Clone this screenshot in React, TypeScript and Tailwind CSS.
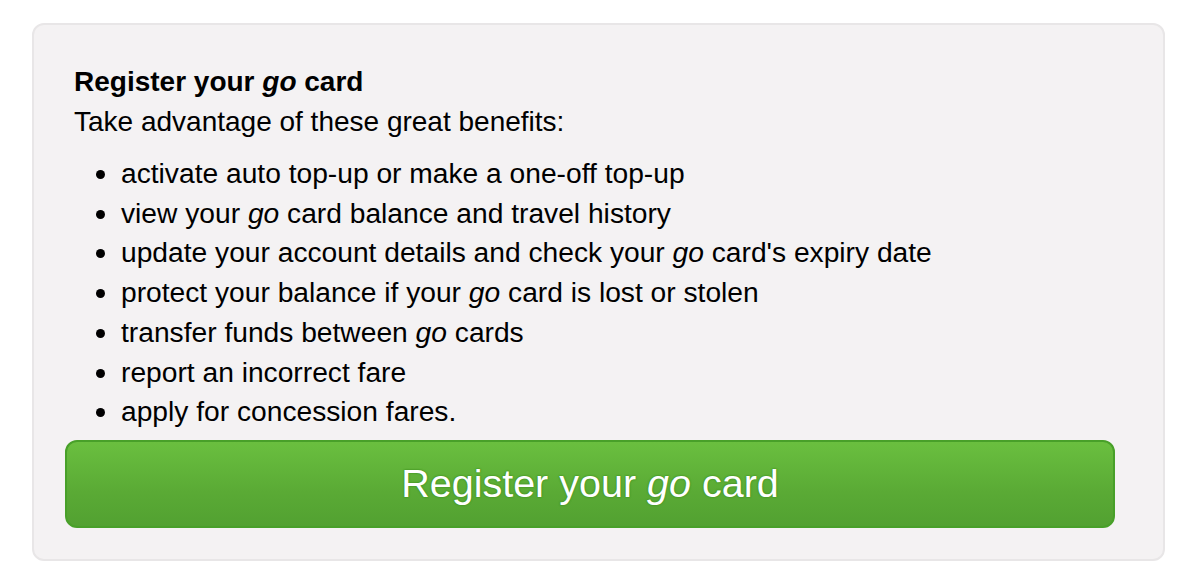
export default function App() {
  const items: React.ReactNode[] = [
    <>activate auto top-up or make a one-off top-up</>,
    <>view your <i>go</i> card balance and travel history</>,
    <>update your account details and check your <i>go</i> card's expiry date</>,
    <>protect your balance if your <i>go</i> card is lost or stolen</>,
    <>transfer funds between <i>go</i> cards</>,
    <>report an incorrect fare</>,
    <>apply for concession fares.</>,
  ]

  return (
    <div className="min-h-screen bg-white pt-[23px] pl-[32px] font-['Liberation_Sans',Arial,sans-serif] text-black">
      <div className="w-[1133px] h-[538px] rounded-[12px] border-2 border-[#e8e6e7] bg-[#f4f2f3] pt-[40px]">
        <h2 className="ml-[40px] text-[28px] font-bold leading-[34px]">
          Register your <i>go</i> card
        </h2>
        <p className="ml-[40px] mt-[3px] text-[28px] leading-[40px]">Take advantage of these great benefits:</p>
        <ul className="mt-[12px] ml-[86px] list-disc text-[28.2px] leading-[39.7px]">
          {items.map((item, i) => (
            <li key={i} className="pl-[1px]">{item}</li>
          ))}
        </ul>
        <button className="mt-[8px] ml-[31px] flex h-[88px] w-[1050px] items-center justify-center rounded-[12px] border-2 border-[#48a029] bg-gradient-to-b from-[#6abf3f] via-[#5aaa35] via-60% to-[#52a131] text-[39.5px] text-white [text-shadow:0_0_2px_#449624,0_0_2px_#449624,0_0_1px_#449624]">
          <span>Register your <i>go</i> card</span>
        </button>
      </div>
    </div>
  )
}
